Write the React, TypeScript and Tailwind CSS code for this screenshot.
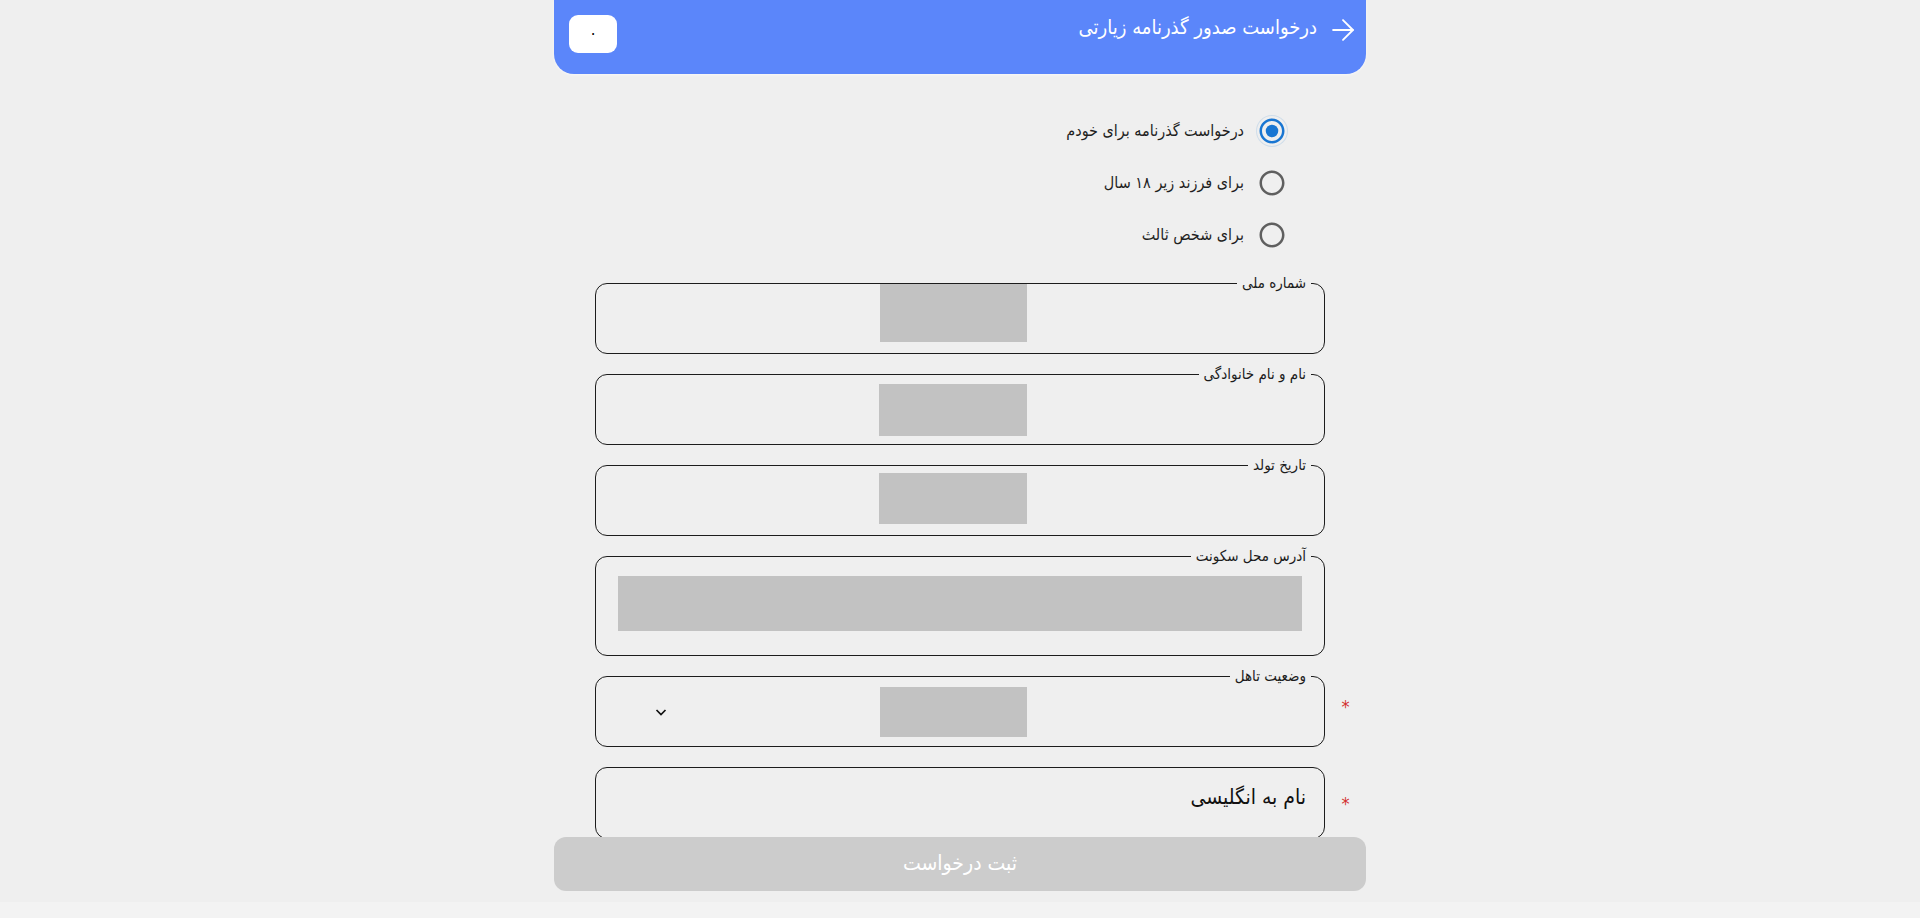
import { ArrowRight } from 'lucide-react';

const font = { fontFamily: '"DejaVu Sans Condensed", "DejaVu Sans", "Noto Sans", sans-serif' };

function RadioIcon({ checked }: { checked: boolean }) {
  return (
    <span
      className={`flex h-[30px] w-[30px] items-center justify-center rounded-full ${
        checked ? 'shadow-[0_0_0_1px_rgba(25,118,210,0.15)]' : ''
      }`}
    >
      <svg viewBox="0 0 24 24" className="h-[30px] w-[30px]">
        <path
          fill={checked ? '#1976d2' : '#5f5f5f'}
          d="M12 2C6.48 2 2 6.48 2 12s4.48 10 10 10 10-4.48 10-10S17.52 2 12 2zm0 18c-4.42 0-8-3.58-8-8s3.58-8 8-8 8 3.58 8 8-3.58 8-8 8z"
        />
        {checked && <circle cx="12" cy="12" r="5" fill="#1976d2" />}
      </svg>
    </span>
  );
}

const options = [
  { label: 'درخواست گذرنامه برای خودم', checked: true },
  { label: 'برای فرزند زیر ۱۸ سال', checked: false },
  { label: 'برای شخص ثالث', checked: false },
];

function Row({ required, children }: { required?: boolean; children: React.ReactNode }) {
  return (
    <div className="flex items-center">
      <span className="w-[41px] text-center text-[18px] text-[#d32f2f]">{required ? '*' : ''}</span>
      <div className="flex-1">{children}</div>
      <span className="w-[41px]" />
    </div>
  );
}

function Field({
  label,
  tall,
  children,
}: {
  label: string;
  tall?: boolean;
  children: React.ReactNode;
}) {
  return (
    <fieldset className="rounded-[12px] border border-[#1c1c1c] px-[13px]">
      <legend className="px-[5px] text-[15px] leading-[20px] text-[#1c1c1c]">{label}</legend>
      <div className={`-mt-[9px] flex items-center ${tall ? 'h-[98px]' : 'h-[69px]'}`}>
        {children}
      </div>
    </fieldset>
  );
}

export default function App() {
  return (
    <div className="flex h-[918px] flex-col overflow-hidden bg-[#efefef]" style={font}>
      <div className="relative flex-1">
        <div dir="rtl" className="relative mx-auto flex h-full w-[812px] flex-col">
          {/* Header */}
          <header className="flex h-[74px] items-start justify-between rounded-b-[20px] bg-[#5b86fa] pl-[15px] pr-[6px] pt-[12px] shadow-[0_1px_3px_rgba(255,255,255,0.6)]">
            <div className="flex h-[30px] items-center gap-[9px] text-white">
              <ArrowRight size={34} strokeWidth={1.3} className="mt-[6px]" />
              <span className="text-[20px]">درخواست صدور گذرنامه زیارتی</span>
            </div>
            <div className="mt-[3px] flex h-[38px] w-[48px] items-center justify-center rounded-[9px] bg-white text-[16px] text-black">
              ۰
            </div>
          </header>

          {/* Radio group */}
          <div className="mt-[31px] flex flex-col pr-[79px]">
            {options.map((o) => (
              <label key={o.label} className="flex h-[52px] items-center gap-[13px]">
                <RadioIcon checked={o.checked} />
                <span className="text-[16px] text-[#1f1f1f]">{o.label}</span>
              </label>
            ))}
          </div>

          {/* Fields */}
          <div className="mt-[12px] flex flex-col gap-[10px]">
            <Row>
              <Field label="شماره ملی">
                <div className="mr-[284px] self-start h-[58px] w-[147px] bg-[#c2c2c2]" />
              </Field>
            </Row>
            <Row>
              <Field label="نام و نام خانوادگی">
                <div className="mr-[284px] h-[52px] w-[148px] bg-[#c2c2c2]" />
              </Field>
            </Row>
            <Row>
              <Field label="تاریخ تولد">
                <div className="mr-[284px] -mt-[5px] h-[51px] w-[148px] bg-[#c2c2c2]" />
              </Field>
            </Row>
            <Row>
              <Field label="آدرس محل سکونت" tall>
                <div className="mx-[9px] -mt-[5px] h-[55px] flex-1 bg-[#c2c2c2]" />
              </Field>
            </Row>
            <Row required>
              <Field label="وضعیت تاهل">
                <div className="mr-[284px] h-[50px] w-[147px] bg-[#c2c2c2]" />
                <svg
                  viewBox="0 0 14 14"
                  className="ml-[45px] mr-auto h-[14px] w-[14px]"
                  fill="none"
                  stroke="#111"
                  strokeWidth="1.7"
                >
                  <path d="M2.5 5l4.5 4.5L11.5 5" />
                </svg>
              </Field>
            </Row>
            <div className="mt-[10px]">
              <Row required>
                <div className="flex h-[72px] items-center rounded-[12px] border border-[#1c1c1c] pb-[10px] pr-[18px] text-[21px] text-[#111]">
                  نام به انگلیسی
                </div>
              </Row>
            </div>
          </div>

          <button className="absolute left-0 right-0 top-[837px] h-[54px] rounded-[12px] bg-[#cccccc] text-[21px] text-white">
            ثبت درخواست
          </button>
        </div>
      </div>
      <div className="h-[16px] bg-[#f3f3f3]" />
    </div>
  );
}
